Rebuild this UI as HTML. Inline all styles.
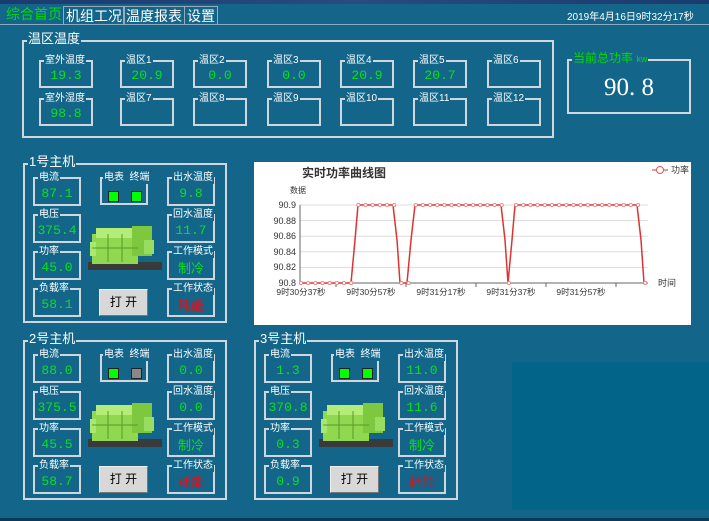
<!DOCTYPE html>
<html><head><meta charset="utf-8"><style>
*{margin:0;padding:0;box-sizing:border-box}
body{width:709px;height:521px;background:#13668a;position:relative;overflow:hidden;font-family:"Liberation Sans","Noto Sans CJK SC",sans-serif;color:#fff}
.a{position:absolute}
.b{position:absolute;border:2px solid #cfd6dc}
.l{position:absolute;top:-8px;left:3px;background:#13668a;color:#fff;font-size:10px;line-height:13px;padding:0 1px;white-space:nowrap}
.v{position:absolute;left:0;right:0;text-align:center;color:#0be01a;font-family:"Liberation Mono","Noto Sans CJK SC",monospace;font-size:13px;letter-spacing:0}
.tab{position:absolute;top:6px;height:19px;border:1px solid #9ab;border-bottom:none;font-size:14px;line-height:18px;padding:0 2px;color:#fff;font-family:"Liberation Sans","Noto Sans CJK SC",sans-serif}
.g{position:absolute;width:204px;height:160px}
.btn{position:absolute;background:#d8d8d8;border:1px solid #eee;border-right-color:#777;border-bottom-color:#777;color:#000;font-size:12px;text-align:center;line-height:25px}
.led{position:absolute;width:11px;height:11px;border:1px solid #222;background:#0f0;top:12px}
</style></head><body>
<div class="a" style="left:0;top:0;width:709px;height:4px;background:linear-gradient(90deg,#1a3b6e,#2a4a80,#1a3b6e)"></div>
<div class="a" style="left:0;top:24px;width:709px;height:1px;background:#8aa8c0"></div>
<div class="tab" style="left:4px;top:5px;height:20px;border:none;color:#0d0;font-size:14px">综合首页</div>
<div class="tab" style="left:63px">机组工况</div>
<div class="tab" style="left:123px">温度报表</div>
<div class="tab" style="left:184px">设置</div>
<div class="a" style="left:567px;top:8px;font-size:10px;font-family:'Liberation Sans','Noto Sans CJK SC',sans-serif">2019年4月16日9时32分17秒</div>

<div class="b" style="left:22px;top:40px;width:532px;height:98px"><div class="l" style="font-size:13px;top:-10px;left:3px">温区温度</div></div>
<div class="b" style="left:39px;top:60px;width:54px;height:28px"><div class="l">室外温度</div><div class="v" style="top:6px">19.3</div></div>
<div class="b" style="left:120px;top:60px;width:54px;height:28px"><div class="l">温区1</div><div class="v" style="top:6px">20.9</div></div>
<div class="b" style="left:193px;top:60px;width:54px;height:28px"><div class="l">温区2</div><div class="v" style="top:6px">0.0</div></div>
<div class="b" style="left:267px;top:60px;width:54px;height:28px"><div class="l">温区3</div><div class="v" style="top:6px">0.0</div></div>
<div class="b" style="left:340px;top:60px;width:54px;height:28px"><div class="l">温区4</div><div class="v" style="top:6px">20.9</div></div>
<div class="b" style="left:413px;top:60px;width:54px;height:28px"><div class="l">温区5</div><div class="v" style="top:6px">20.7</div></div>
<div class="b" style="left:487px;top:60px;width:54px;height:28px"><div class="l">温区6</div></div>
<div class="b" style="left:39px;top:98px;width:54px;height:28px"><div class="l">室外湿度</div><div class="v" style="top:6px">98.8</div></div>
<div class="b" style="left:120px;top:98px;width:54px;height:28px"><div class="l">温区7</div></div>
<div class="b" style="left:193px;top:98px;width:54px;height:28px"><div class="l">温区8</div></div>
<div class="b" style="left:267px;top:98px;width:54px;height:28px"><div class="l">温区9</div></div>
<div class="b" style="left:340px;top:98px;width:54px;height:28px"><div class="l">温区10</div></div>
<div class="b" style="left:413px;top:98px;width:54px;height:28px"><div class="l">温区11</div></div>
<div class="b" style="left:487px;top:98px;width:54px;height:28px"><div class="l">温区12</div></div>

<div class="b" style="left:567px;top:59px;width:124px;height:55px"><div class="l" style="color:#0d0;font-size:12px;top:-9px">当前总功率 <span style="font-size:9px">kw</span></div>
<div class="a" style="left:0;right:0;top:13px;text-align:center;font-size:25px;font-family:'Liberation Serif',serif">90. 8</div></div>

<div class="a" style="left:254px;top:162px;width:437px;height:163px;background:#fff"></div>
<svg class="a" style="left:0;top:0" width="709" height="521">
<g font-family="Liberation Sans,Noto Sans CJK SC,sans-serif" fill="#333">
<text x="302" y="177" font-size="12" font-weight="bold">实时功率曲线图</text>
<text x="290" y="193" font-size="8">数据</text>
<line x1="652" y1="170" x2="668" y2="170" stroke="#d55" stroke-width="1.2"/><circle cx="660" cy="170" r="3.5" fill="#fff" stroke="#d55"/>
<text x="671" y="173" font-size="9">功率</text>
<g stroke="#ddd" stroke-width="1"><line x1="300" y1="205" x2="648" y2="205"/><line x1="300" y1="220.6" x2="648" y2="220.6"/><line x1="300" y1="236.2" x2="648" y2="236.2"/><line x1="300" y1="251.8" x2="648" y2="251.8"/><line x1="300" y1="267.4" x2="648" y2="267.4"/></g>
<line x1="300" y1="283" x2="648" y2="283" stroke="#666"/>
<line x1="300" y1="205" x2="300" y2="283" stroke="#666"/>
<g font-size="9" text-anchor="end"><text x="296" y="208">90.9</text><text x="296" y="224">90.88</text><text x="296" y="239">90.86</text><text x="296" y="255">90.84</text><text x="296" y="270">90.82</text><text x="296" y="286">90.8</text></g>
<g font-size="8.5" text-anchor="middle"><text x="301" y="295">9时30分37秒</text><text x="371" y="295">9时30分57秒</text><text x="441" y="295">9时31分17秒</text><text x="511" y="295">9时31分37秒</text><text x="581" y="295">9时31分57秒</text></g>
<text x="658" y="286" font-size="9">时间</text>
<g stroke="#666"><line x1="336" y1="283" x2="336" y2="287"/><line x1="406" y1="283" x2="406" y2="287"/><line x1="476" y1="283" x2="476" y2="287"/><line x1="546" y1="283" x2="546" y2="287"/><line x1="616" y1="283" x2="616" y2="287"/></g>
</g>
<polyline fill="none" stroke="#d33" stroke-width="1.5" points="301,283 351,283 355,240 358,205 393,205 397,240 400,283 407,283 411,240 415,205 501,205 505,240 508,283 512,240 515,205 637,205 641,240 644,283"/>
<g fill="#fff" stroke="#e77" stroke-width="0.8" id="pts"></g>
</svg>

<div class="g" style="left:23px;top:163px" id="g1"></div>
<div class="g" style="left:23px;top:340px" id="g2"></div>
<div class="g" style="left:254px;top:340px" id="g3"></div>

<div class="a" style="left:512px;top:362px;width:197px;height:148px;background:#026489"></div>
<div class="a" style="left:0;top:518px;width:709px;height:3px;background:#0b3a55"></div>

<div id="tpl" style="display:none">
<div class="b" style="left:0;top:0;width:204px;height:160px"><div class="l" style="font-size:13px;top:-10px">NAME</div></div>
<div class="b" style="left:10px;top:14px;width:48px;height:29px"><div class="l">电流</div><div class="v" style="top:7px">V1</div></div>
<div class="b" style="left:10px;top:51px;width:48px;height:29px"><div class="l">电压</div><div class="v" style="top:7px">V2</div></div>
<div class="b" style="left:10px;top:88px;width:48px;height:29px"><div class="l">功率</div><div class="v" style="top:7px">V3</div></div>
<div class="b" style="left:10px;top:125px;width:48px;height:29px"><div class="l">负载率</div><div class="v" style="top:7px">V4</div></div>
<div class="b" style="left:77px;top:14px;width:48px;height:28px"><div class="l" style="left:1px">电表 &nbsp;终端</div><div class="led" style="left:6px"></div><div class="led" style="left:29px;background:C2"></div></div>
<div class="b" style="left:144px;top:14px;width:48px;height:29px"><div class="l">出水温度</div><div class="v" style="top:7px">V5</div></div>
<div class="b" style="left:144px;top:51px;width:48px;height:29px"><div class="l">回水温度</div><div class="v" style="top:7px">V6</div></div>
<div class="b" style="left:144px;top:88px;width:48px;height:29px"><div class="l">工作模式</div><div class="v" style="top:5px;font-family:'Noto Sans CJK SC',sans-serif;font-size:13px">制冷</div></div>
<div class="b" style="left:144px;top:125px;width:48px;height:29px"><div class="l">工作状态</div><div class="v" style="top:5px;color:#e0101a;font-family:'Noto Sans CJK SC',sans-serif;font-size:13px">耗能</div></div>
<svg class="a" style="left:65px;top:57px" width="75" height="52"><rect x="0" y="42" width="74" height="8" fill="#3a3a3a"/><rect x="4" y="14" width="46" height="30" fill="#8fd850"/><rect x="8" y="8" width="36" height="10" fill="#b4ec78"/><rect x="44" y="6" width="20" height="30" fill="#7ec840"/><rect x="56" y="20" width="10" height="14" fill="#98dc60"/><rect x="2" y="22" width="6" height="14" fill="#a8e870"/><g stroke="#5a9a2a" stroke-width="1"><line x1="20" y1="14" x2="20" y2="42"/><line x1="34" y1="14" x2="34" y2="42"/><line x1="4" y1="28" x2="50" y2="28"/></g></svg>
<div class="btn" style="left:76px;top:126px;width:49px;height:27px">打 开</div>
</div>
<script>
var t=document.getElementById('tpl').innerHTML;
var d=[['g1','1号主机','87.1','375.4','45.0','58.1','9.8','11.7','#0f0'],['g2','2号主机','88.0','375.5','45.5','58.7','0.0','0.0','#888'],['g3','3号主机','1.3','370.8','0.3','0.9','11.0','11.6','#0f0']];
d.forEach(function(r){document.getElementById(r[0]).innerHTML=t.replace('NAME',r[1]).replace('V1',r[2]).replace('V2',r[3]).replace('V3',r[4]).replace('V4',r[5]).replace('V5',r[6]).replace('V6',r[7]).replace('C2',r[8]);});
var p=document.getElementById('pts'),s='';
for(var i=0;i<49;i++){var lo=(i<=7||i==14||i==15||i==29||i==48);var x=301+i*7.17;s+='<circle cx="'+x+'" cy="'+(lo?283:205)+'" r="1.6"/>';}
p.innerHTML=s;
</script>
</body></html>
